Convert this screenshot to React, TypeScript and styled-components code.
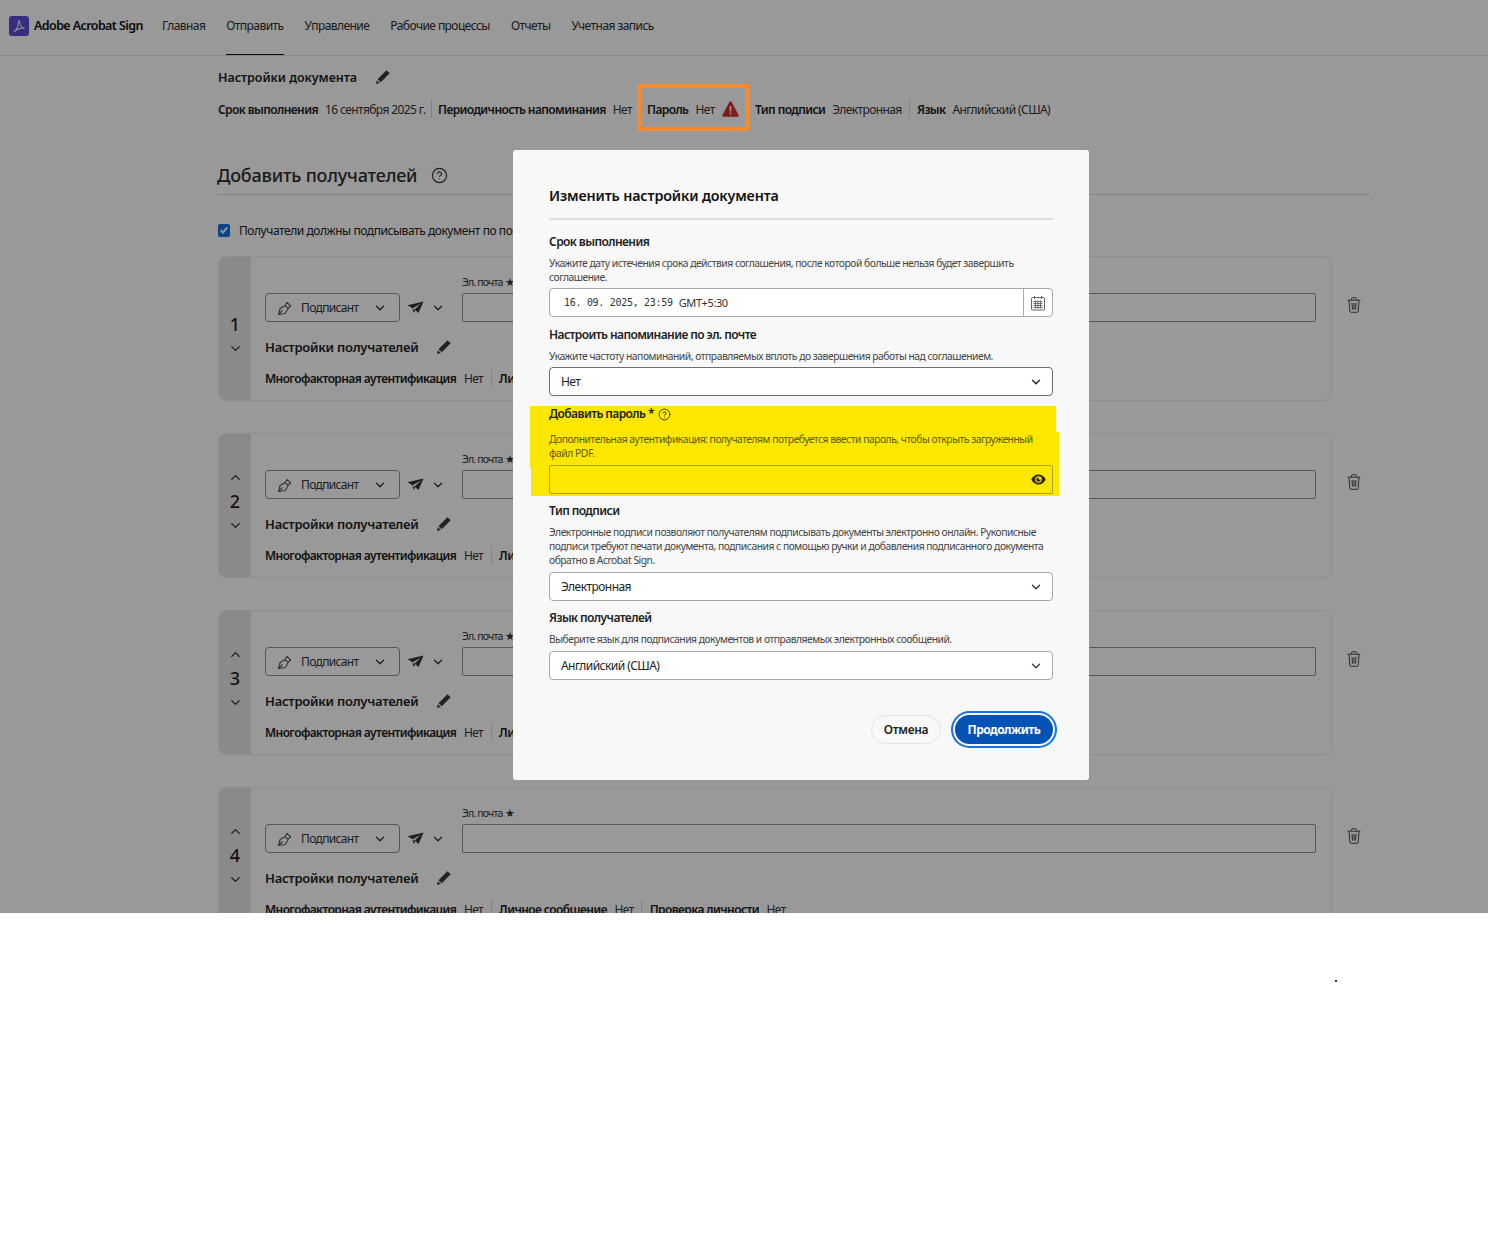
import styled, { createGlobalStyle } from "styled-components";
import { ChevronDown, ChevronUp, CircleHelp } from "lucide-react";

const GlobalStyle = createGlobalStyle`
    html, body {
        margin: 0;
        padding: 0;
        background: #fff;
    }
    body {
        font-family: "Noto Sans", "Liberation Sans", sans-serif;
        color: #222;
    }
`;

const Page = styled.div`
    width: 1488px;
    height: 1243px;
    overflow: hidden;
    background: #fff;
`;

// everything behind the dialog, clipped where the screenshot stops
const Screen = styled.div`
    position: relative;
    height: 913px;
    overflow: hidden;
    background: #fff;
`;

const Scrim = styled.div`
    position: absolute;
    inset: 0;
    z-index: 1;
    background: rgba(0, 0, 0, 0.4);
`;

const Header = styled.header`
    height: 55px;
    display: flex;
    align-items: center;
    padding-left: 9px;
    border-bottom: 1px solid #e2e2e2;
    box-sizing: content-box;
`;

const Brand = styled.div`
    display: flex;
    align-items: center;
    gap: 5px;
    width: 153px;
    padding-bottom: 4px;
    font-size: 12.5px;
    font-weight: 600;
    letter-spacing: -0.6px;
    color: #111;
    white-space: nowrap;
`;

const Nav = styled.nav`
    display: flex;
    gap: 21px;
    height: 100%;
`;

const NavItem = styled.a<{ $active?: boolean }>`
    display: flex;
    align-items: center;
    height: 100%;
    padding-bottom: 4px;
    box-sizing: border-box;
    font-size: 12px;
    letter-spacing: -0.56px;
    color: #2c2c2c;
    border-bottom: 1px solid ${(p) => (p.$active ? "#111" : "transparent")};
    margin-bottom: -1px;
`;

const Content = styled.main`
    width: 1160px;
    margin-left: 218px;
`;

const DocTitleRow = styled.div`
    display: flex;
    align-items: center;
    gap: 18px;
    height: 18px;
    margin-top: 12px;
    font-size: 12.5px;
    font-weight: 600;
    letter-spacing: -0.05px;
`;

const SummaryRow = styled.div`
    display: flex;
    align-items: center;
    height: 18px;
    margin-top: 14px;
    font-size: 12px;
    white-space: nowrap;
`;

const SummaryItem = styled.div<{ $divided?: boolean; $width: number; $inset?: number }>`
    position: relative;
    display: flex;
    align-items: center;
    gap: 7px;
    width: ${(p) => p.$width}px;
    height: 18px;
    padding-left: ${(p) => p.$inset ?? 0}px;
    border-right: 1px solid ${(p) => (p.$divided ? "#ddd" : "transparent")};
    box-sizing: border-box;
`;

// orange callout drawn by the author of the screenshot, sits above the scrim
const PasswordItem = styled(SummaryItem)`
    &::after {
        content: "";
        position: absolute;
        z-index: 2;
        top: -16px;
        bottom: -13px;
        left: -10px;
        right: 5px;
        border: 4px solid #f68a2c;
    }
`;

const Key = styled.b`
    font-weight: 600;
    font-size: 12px;
    letter-spacing: -0.6px;
`;

const Val = styled.span`
    font-size: 12px;
    letter-spacing: -0.6px;
    color: #333;
`;

const SectionHead = styled.div`
    width: 1153px;
    display: flex;
    align-items: center;
    gap: 14px;
    height: 37px;
    margin-top: 40px;
    margin-left: -1px;
    padding-bottom: 2px;
    box-sizing: border-box;
    border-bottom: 1px solid #dcdcdc;
    font-size: 18px;
    font-weight: 500;
    letter-spacing: -0.2px;
    color: #2c2c2c;
`;

const CheckRow = styled.label`
    display: flex;
    align-items: center;
    gap: 9px;
    height: 20px;
    margin-top: 25px;
    margin-bottom: 16px;
    font-size: 12px;
    letter-spacing: -0.45px;
    white-space: nowrap;
`;

const CheckBox = styled.span`
    display: flex;
    align-items: center;
    justify-content: center;
    width: 12px;
    height: 13px;
    border-radius: 2px;
    background: #1473e6;
`;

const RecipientRow = styled.section`
    display: flex;
    align-items: flex-start;
    margin-bottom: 32px;
`;

const Card = styled.div`
    width: 1114px;
    height: 145px;
    flex: none;
    display: flex;
    border: 1px solid #ececec;
    border-radius: 8px;
    overflow: hidden;
    box-sizing: border-box;
`;

const OrderRail = styled.div`
    width: 32px;
    flex: none;
    display: flex;
    flex-direction: column;
    align-items: center;
    padding-top: 31px;
    background: #e6e6e6;
`;

const RailSlot = styled.div<{ $hidden?: boolean }>`
    height: 24px;
    display: flex;
    align-items: center;
    justify-content: center;
    visibility: ${(p) => (p.$hidden ? "hidden" : "visible")};
    font-size: 18px;
    font-weight: 500;
    color: #222;
`;

const CardBody = styled.div`
    flex: 1;
    padding: 18px 15px 0 14px;
`;

const TopLine = styled.div`
    display: flex;
    align-items: flex-end;
`;

const RoleSelect = styled.div`
    width: 135px;
    height: 29px;
    flex: none;
    display: flex;
    align-items: center;
    padding-left: 11px;
    box-sizing: border-box;
    border: 1px solid #8f8f8f;
    border-radius: 4px;
    font-size: 12px;
    letter-spacing: -0.65px;
    color: #333;
`;

const RoleName = styled.span`
    width: 72px;
    margin-left: 8px;
`;

const SendMode = styled.div`
    width: 62px;
    height: 29px;
    flex: none;
    display: flex;
    align-items: center;
    gap: 7px;
    padding-left: 7px;
    box-sizing: border-box;
`;

const EmailField = styled.div`
    flex: 1;
`;

const EmailLabel = styled.div`
    height: 14px;
    margin-bottom: 4px;
    font-size: 10.5px;
    letter-spacing: -0.8px;
    line-height: 14px;
    color: #333;
`;

const EmailInput = styled.div`
    height: 29px;
    box-sizing: border-box;
    border: 1px solid #8f8f8f;
    border-radius: 2px;
`;

const SettingsTitle = styled.div`
    display: flex;
    align-items: center;
    gap: 18px;
    height: 18px;
    margin-top: 16px;
    font-size: 13px;
    font-weight: 600;
    letter-spacing: -0.25px;
`;

const SettingsLine = styled.div`
    display: flex;
    align-items: center;
    gap: 7.5px;
    height: 18px;
    margin-top: 13px;
    white-space: nowrap;
`;

const Sep = styled.span`
    width: 1px;
    height: 18px;
    background: #ddd;
`;

const TrashSlot = styled.div`
    width: 44px;
    flex: none;
    display: flex;
    justify-content: center;
    padding-top: 41px;
`;

// white strip under the captured screen, with the one stray speck it contains
const BottomStrip = styled.div`
    padding: 67px 0 0 1335px;
`;

const Speck = styled.div`
    width: 2px;
    height: 2px;
    background: #333;
`;

const Dialog = styled.div`
    position: absolute;
    z-index: 3;
    left: 513px;
    top: 150px;
    width: 576px;
    height: 630px;
    padding: 35px 36px 0;
    box-sizing: border-box;
    border-radius: 3px;
    background: #f8f8f8;
`;

const DialogTitle = styled.h2`
    margin: 0;
    padding-bottom: 11px;
    height: 22px;
    line-height: 22px;
    font-size: 14.3px;
    font-weight: 600;
    letter-spacing: -0.15px;
    color: #111;
    border-bottom: 2px solid #dedede;
`;

const Field = styled.div<{ $top: number }>`
    margin-top: ${(p) => p.$top}px;
`;

const HighlightField = styled(Field)`
    position: relative;
    &::before {
        content: "";
        position: absolute;
        top: 2px;
        left: -19px;
        width: 529px;
        height: 90px;
        background: #fbe700;
        clip-path: polygon(0 0, 526px 0, 526px 26px, 100% 26px, 100% 100%, 1px 100%, 1px 62px, 0 62px);
    }
    & > * {
        position: relative;
    }
`;

const FieldLabel = styled.div`
    display: flex;
    align-items: center;
    gap: 4px;
    height: 18px;
    font-size: 12px;
    font-weight: 600;
    letter-spacing: -0.58px;
    color: #222;
`;

const LabelHelp = styled.span`
    display: flex;
    margin-top: 3px;
`;

const FieldHint = styled.p<{ $olive?: boolean }>`
    margin: ${(p) => (p.$olive ? 10 : 6)}px 0 5px;
    font-size: 10.3px;
    line-height: 14px;
    letter-spacing: -0.47px;
    color: ${(p) => (p.$olive ? "#5d5a00" : "#444")};
`;

const DateBox = styled.div`
    height: 29px;
    margin-top: -1px;
    display: flex;
    box-sizing: border-box;
    border: 1px solid #a8a8a8;
    border-radius: 4px;
    background: #fff;
`;

const DateValue = styled.div`
    flex: 1;
    display: flex;
    align-items: center;
    gap: 6px;
    padding-left: 14px;
    font-size: 11px;
    letter-spacing: -0.4px;
    color: #333;
`;

const DateDigits = styled.span`
    font-family: "DejaVu Sans Mono", "Liberation Mono", monospace;
    font-size: 10px;
    letter-spacing: -0.3px;
`;

const CalendarButton = styled.div`
    width: 28px;
    display: flex;
    align-items: center;
    justify-content: center;
    border-left: 1px solid #a8a8a8;
`;

const SelectBox = styled.div<{ $strong?: boolean }>`
    height: 29px;
    margin-top: ${(p) => (p.$strong ? -1 : 0)}px;
    display: flex;
    align-items: center;
    justify-content: space-between;
    padding: 0 9px 0 11px;
    box-sizing: border-box;
    border: 1px solid ${(p) => (p.$strong ? "#6e6e6e" : "#a8a8a8")};
    border-radius: 4px;
    background: #fff;
    font-size: 12px;
    letter-spacing: -0.55px;
    color: #222;
`;

const PasswordBox = styled.div`
    height: 29px;
    display: flex;
    align-items: center;
    justify-content: flex-end;
    padding-right: 6px;
    box-sizing: border-box;
    border: 1px solid #a9a300;
    border-radius: 2px;
`;

const Actions = styled.div`
    display: flex;
    justify-content: flex-end;
    align-items: center;
    gap: 14px;
    margin-top: 35px;
`;

const CancelButton = styled.button`
    width: 70px;
    height: 29px;
    padding: 0;
    border: 1.5px solid #e3e3e3;
    border-radius: 15px;
    background: #f8f8f8;
    font-family: inherit;
    font-size: 12px;
    font-weight: 600;
    letter-spacing: -0.35px;
    color: #222;
`;

const ContinueButton = styled.button`
    width: 98px;
    height: 29px;
    padding: 0;
    border: none;
    border-radius: 15px;
    background: #0552b5;
    box-shadow: 0 0 0 2px #f8f8f8, 0 0 0 4px #1473e6;
    font-family: inherit;
    font-size: 12px;
    font-weight: 700;
    letter-spacing: -0.55px;
    color: #fff;
`;

const LogoIcon = () => (
    <svg width="20" height="20" viewBox="0 0 20 20">
        <rect width="20" height="20" rx="3" fill="#5a4fd0" />
        <path
            d="M5 15.5c2.2-1.4 4.2-5.4 4.6-10 .1-1 1-.8 1 .2 0 3 2 6 5 6.6-3-.5-7 .3-9.6 2.7"
            fill="none"
            stroke="#e9e6ff"
            strokeWidth="1.1"
            strokeLinecap="round"
        />
    </svg>
);

const PencilIcon = () => (
    <svg width="16" height="16" viewBox="0 0 16 16">
        <path d="M11.4 1.2l3.3 3.1-8.9 9-3.3-3.1zM1.9 11.2l2.9 2.9-3.9 1z" fill="#3a3a3a" />
    </svg>
);

const WarningIcon = () => (
    <svg width="17" height="16" viewBox="0 0 17 16">
        <path d="M7.4 1c.5-.9 1.7-.9 2.2 0l7 13c.4.8-.2 1.7-1.1 1.7h-14c-.9 0-1.5-.9-1.1-1.7z" fill="#d7302a" />
        <rect x="7.7" y="5" width="1.7" height="5.6" fill="#fff" />
        <rect x="7.7" y="11.6" width="1.7" height="1.8" fill="#fff" />
    </svg>
);

const NibIcon = () => (
    <svg width="16" height="16" viewBox="0 0 16 16" fill="none" stroke="#555" strokeWidth="1.1" strokeLinejoin="round">
        <path d="M1.5 14.5l1.6-6 5-3 3 3.2-3 4.8z" />
        <path d="M1.5 14.5l4-4" />
        <path d="M8.5 5l1.5-2.6 3.6 3.6-2.4 2" />
    </svg>
);

const PlaneIcon = () => (
    <svg width="17" height="14" viewBox="0 0 17 14">
        <path d="M0.5 4.2L16.5 0.5 11.5 12 7.6 8.6 14 2.6 5.6 7.2z" fill="#333" />
        <path d="M5.6 7.6l1 4.4 1.6-2.6z" fill="#333" />
    </svg>
);

const TrashIcon = () => (
    <svg width="14" height="16" viewBox="0 0 14 16" fill="none" stroke="#4a4a4a" strokeWidth="1">
        <path d="M.6 3.2h12.8M4.6 3V1.4c0-.4.3-.7.7-.7h3.4c.4 0 .7.3.7.7V3" />
        <path d="M2 3.2l.8 11c0 .6.5 1.1 1.1 1.1h6.2c.6 0 1.1-.5 1.1-1.1l.8-11" />
        <path d="M5 6l.5 6.6M7 6v6.6M9 6l-.5 6.6" />
    </svg>
);

const CalendarIcon = () => (
    <svg width="16" height="16" viewBox="0 0 16 16" fill="none" stroke="#666" strokeWidth="1">
        <rect x="1.5" y="2.5" width="13" height="12.5" rx="1" />
        <path d="M4.5 1v3M11.5 1v3" />
        <path d="M3.5 6.5h9M3.5 8.5h9M3.5 10.5h9M3.5 12.5h9M5.5 5.5v8M8 5.5v8M10.5 5.5v8" strokeWidth=".9" />
    </svg>
);

const EyeIcon = () => (
    <svg width="15" height="11" viewBox="0 0 15 11">
        <path d="M7.5.5C4.2.5 1.5 2.6.3 5.5c1.2 2.9 3.9 5 7.2 5s6-2.1 7.2-5C13.5 2.6 10.8.5 7.5.5z" fill="#2b2b00" />
        <circle cx="7.5" cy="5.5" r="3.3" fill="#fbe700" />
        <path d="M7.5 3.2a2.3 2.3 0 1 0 2.3 2.3H7.5z" fill="#2b2b00" />
    </svg>
);

const CheckMark = () => (
    <svg width="10" height="10" viewBox="0 0 10 10" fill="none" stroke="#fff" strokeWidth="1.8">
        <path d="M1.8 5.2l2.2 2.4 4.2-5.2" />
    </svg>
);

const recipients = [1, 2, 3, 4];

const Recipient = ({ order }: { order: number }) => (
    <RecipientRow>
        <Card>
            <OrderRail>
                <RailSlot $hidden={order === 1}>
                    <ChevronUp size={15} strokeWidth={2.2} color="#333" />
                </RailSlot>
                <RailSlot>{order}</RailSlot>
                <RailSlot>
                    <ChevronDown size={15} strokeWidth={2.2} color="#333" />
                </RailSlot>
            </OrderRail>
            <CardBody>
                <TopLine>
                    <RoleSelect>
                        <NibIcon />
                        <RoleName>Подписант</RoleName>
                        <ChevronDown size={14} strokeWidth={2.2} color="#333" />
                    </RoleSelect>
                    <SendMode>
                        <PlaneIcon />
                        <ChevronDown size={14} strokeWidth={2.2} color="#333" />
                    </SendMode>
                    <EmailField>
                        <EmailLabel>Эл. почта ★</EmailLabel>
                        <EmailInput />
                    </EmailField>
                </TopLine>
                <SettingsTitle>
                    Настройки получателей
                    <PencilIcon />
                </SettingsTitle>
                <SettingsLine>
                    <Key>Многофакторная аутентификация</Key>
                    <Val>Нет</Val>
                    <Sep />
                    <Key>Личное сообщение</Key>
                    <Val>Нет</Val>
                    <Sep />
                    <Key>Проверка личности</Key>
                    <Val>Нет</Val>
                </SettingsLine>
            </CardBody>
        </Card>
        <TrashSlot>
            <TrashIcon />
        </TrashSlot>
    </RecipientRow>
);

export default function App() {
    return (
        <Page>
            <GlobalStyle />
            <Screen>
                <Header>
                    <Brand>
                        <LogoIcon />
                        Adobe Acrobat Sign
                    </Brand>
                    <Nav>
                        <NavItem>Главная</NavItem>
                        <NavItem $active>Отправить</NavItem>
                        <NavItem>Управление</NavItem>
                        <NavItem>Рабочие процессы</NavItem>
                        <NavItem>Отчеты</NavItem>
                        <NavItem>Учетная запись</NavItem>
                    </Nav>
                </Header>
                <Content>
                    <DocTitleRow>
                        Настройки документа
                        <PencilIcon />
                    </DocTitleRow>
                    <SummaryRow>
                        <SummaryItem $width={214} $divided>
                            <Key>Срок выполнения</Key>
                            <Val>16 сентября 2025 г.</Val>
                        </SummaryItem>
                        <SummaryItem $width={215} $inset={6}>
                            <Key>Периодичность напоминания</Key>
                            <Val>Нет</Val>
                        </SummaryItem>
                        <PasswordItem $width={108}>
                            <Key>Пароль</Key>
                            <Val>Нет</Val>
                            <WarningIcon />
                        </PasswordItem>
                        <SummaryItem $width={155} $divided>
                            <Key>Тип подписи</Key>
                            <Val>Электронная</Val>
                        </SummaryItem>
                        <SummaryItem $width={150} $inset={7}>
                            <Key>Язык</Key>
                            <Val>Английский (США)</Val>
                        </SummaryItem>
                    </SummaryRow>
                    <SectionHead>
                        Добавить получателей
                        <CircleHelp size={17} strokeWidth={1.6} color="#333" />
                    </SectionHead>
                    <CheckRow>
                        <CheckBox>
                            <CheckMark />
                        </CheckBox>
                        Получатели должны подписывать документ по порядку
                    </CheckRow>
                    {recipients.map((order) => (
                        <Recipient key={order} order={order} />
                    ))}
                </Content>
                <Scrim />
                <Dialog>
                    <DialogTitle>Изменить настройки документа</DialogTitle>
                    <Field $top={12}>
                        <FieldLabel>Срок выполнения</FieldLabel>
                        <FieldHint>
                            Укажите дату истечения срока действия соглашения, после которой больше нельзя будет завершить соглашение.
                        </FieldHint>
                        <DateBox>
                            <DateValue>
                                <DateDigits>16. 09. 2025, 23:59</DateDigits>
                                GMT+5:30
                            </DateValue>
                            <CalendarButton>
                                <CalendarIcon />
                            </CalendarButton>
                        </DateBox>
                    </Field>
                    <Field $top={8}>
                        <FieldLabel>Настроить напоминание по эл. почте</FieldLabel>
                        <FieldHint>Укажите частоту напоминаний, отправляемых вплоть до завершения работы над соглашением.</FieldHint>
                        <SelectBox $strong>
                            Нет
                            <ChevronDown size={14} strokeWidth={2.4} color="#222" />
                        </SelectBox>
                    </Field>
                    <HighlightField $top={8}>
                        <FieldLabel>
                            Добавить пароль *
                            <LabelHelp>
                                <CircleHelp size={13} strokeWidth={1.6} color="#222" />
                            </LabelHelp>
                        </FieldLabel>
                        <FieldHint $olive>
                            Дополнительная аутентификация: получателям потребуется ввести пароль, чтобы открыть загруженный файл PDF.
                        </FieldHint>
                        <PasswordBox>
                            <EyeIcon />
                        </PasswordBox>
                    </HighlightField>
                    <Field $top={7}>
                        <FieldLabel>Тип подписи</FieldLabel>
                        <FieldHint>
                            Электронные подписи позволяют получателям подписывать документы электронно онлайн. Рукописные подписи требуют печати документа, подписания с помощью ручки и добавления подписанного документа обратно в Acrobat Sign.
                        </FieldHint>
                        <SelectBox>
                            Электронная
                            <ChevronDown size={14} strokeWidth={2.2} color="#333" />
                        </SelectBox>
                    </Field>
                    <Field $top={7}>
                        <FieldLabel>Язык получателей</FieldLabel>
                        <FieldHint>Выберите язык для подписания документов и отправляемых электронных сообщений.</FieldHint>
                        <SelectBox>
                            Английский (США)
                            <ChevronDown size={14} strokeWidth={2.2} color="#333" />
                        </SelectBox>
                    </Field>
                    <Actions>
                        <CancelButton>Отмена</CancelButton>
                        <ContinueButton>Продолжить</ContinueButton>
                    </Actions>
                </Dialog>
            </Screen>
            <BottomStrip>
                <Speck />
            </BottomStrip>
        </Page>
    );
}
